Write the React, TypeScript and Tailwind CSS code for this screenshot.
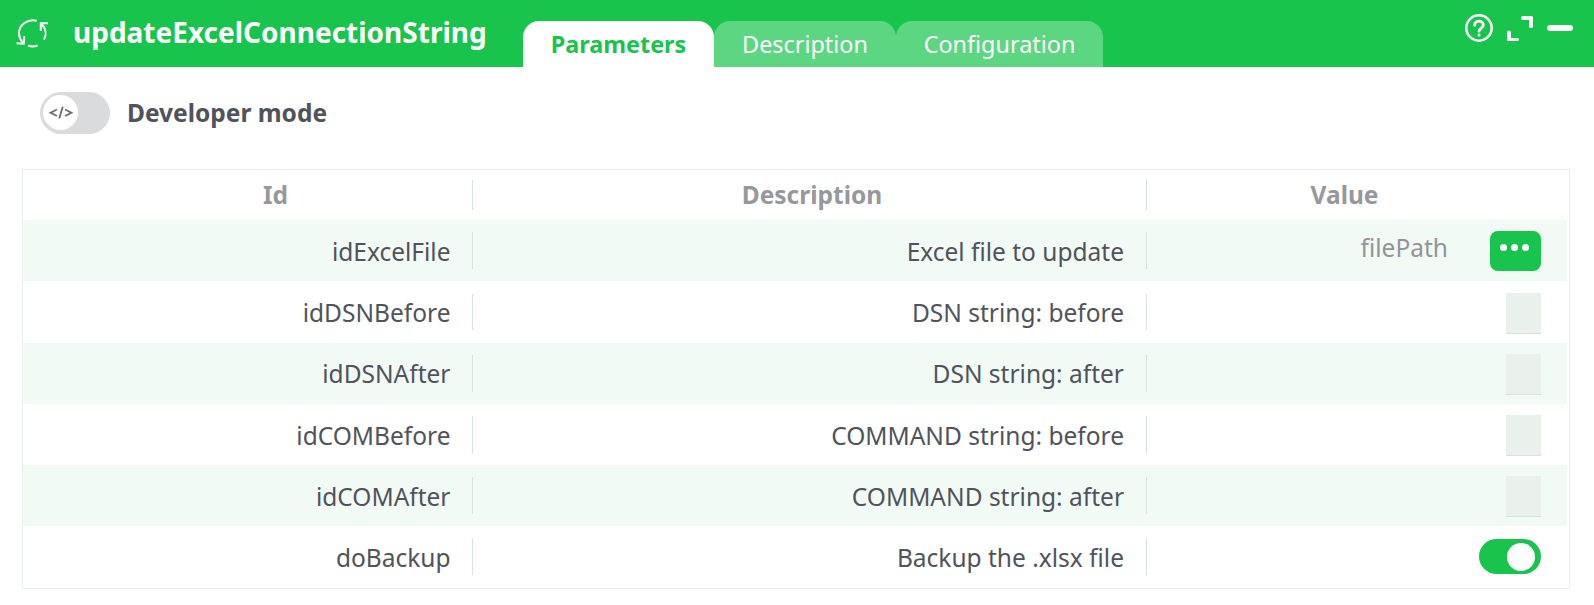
import { ReactNode } from "react"
import clsx from "clsx"

type Param = {
  id: string
  description: string
  tall?: boolean
  pad: string
  value: ReactNode
}

const EmptyField = () => (
  <div className="w-[35px] h-[41px] mt-0.5 bg-[#eaf0eb] border-b border-[#d8e2dc]" />
)

const FilePicker = () => (
  <div className="flex items-start">
    <span className="text-[#929497] leading-[34px] mr-[42px]">filePath</span>
    <button className="w-[51px] h-10 bg-[#18c44c] rounded-lg flex justify-center gap-1 pt-[13px] pr-[2px]">
      <span className="size-[7px] rounded-full bg-white" />
      <span className="size-[7px] rounded-full bg-white" />
      <span className="size-[7px] rounded-full bg-white" />
    </button>
  </div>
)

const Toggle = () => (
  <button className="w-[62px] h-[35px] rounded-full bg-[#18c44c] flex items-center justify-end pr-1.5 mb-px">
    <span className="size-7 rounded-full bg-white" />
  </button>
)

const params: Param[] = [
  { id: "idExcelFile", description: "Excel file to update", pad: "pt-0.5", value: <FilePicker /> },
  { id: "idDSNBefore", description: "DSN string: before", tall: true, pad: "pt-0.5", value: <EmptyField /> },
  { id: "idDSNAfter", description: "DSN string: after", pad: "pt-0", value: <EmptyField /> },
  { id: "idCOMBefore", description: "COMMAND string: before", pad: "pt-0.5", value: <EmptyField /> },
  { id: "idCOMAfter", description: "COMMAND string: after", pad: "pt-0.5", value: <EmptyField /> },
  { id: "doBackup", description: "Backup the .xlsx file", tall: true, pad: "pt-0.5", value: <Toggle /> },
]

const tabs = [
  { label: "Parameters", width: "w-[191px]", active: true },
  { label: "Description", width: "w-[182px]", active: false },
  { label: "Configuration", width: "w-[207px]", active: false },
]

const RefreshIcon = () => (
  <svg className="w-8 h-8" viewBox="0 0 32 32" fill="none" stroke="white" strokeWidth="2">
    <path d="M20.7 3.7C11.5 1.7 3 7.7 3 16.6c0 3.4 1.2 6 3.6 9" />
    <path d="M0.5 26.3l7.2.4.6-7.6" />
    <path d="M12 28.7c3.4 1.1 6.6 1 9.6-.2" />
    <path d="M28 22.7C31 17 29.6 11 25.4 7" />
    <path d="M32 6.3h-7.2v7.6" />
  </svg>
)

const HelpIcon = () => (
  <svg className="w-7 h-7" viewBox="0 0 28 28" fill="none" stroke="white">
    <circle cx="14" cy="14" r="12.7" strokeWidth="2.5" />
    <path d="M9.7 11.3c0-2.7 1.9-4.2 4.3-4.2s4.3 1.6 4.3 3.9c0 3.2-4.3 3.3-4.3 6.2" strokeWidth="2.8" strokeLinecap="round" />
    <circle cx="14" cy="21" r="1.5" fill="white" stroke="none" />
  </svg>
)

const ExpandIcon = () => (
  <svg className="w-[26px] h-[26px]" viewBox="0 0 26 26" fill="white">
    <path d="M16 0H24.5Q26 0 26 1.5V10.5Q26 12 24 12T22 10.5V4H16Q14 4 14 2T16 0Z" />
    <path d="M0 16Q0 14.5 2 14.5T4 16V22H10Q12 22 12 23.5T10 25H0Z" />
  </svg>
)

const Header = () => (
  <header className="h-[67px] bg-[#18c44c] flex items-start">
    <div className="pl-4 pt-[17px]">
      <RefreshIcon />
    </div>
    <h1 className="w-[450px] pl-[25px] pt-3 text-white font-bold text-[28px] leading-[40px] whitespace-nowrap">
      updateExcelConnectionString
    </h1>
    <nav className="flex pt-[21px] pl-[25px]">
      {tabs.map((tab) => (
        <button
          key={tab.label}
          className={clsx(
            "h-[46px] rounded-t-[16px] text-[23.4px] leading-[46px] text-center",
            tab.width,
            tab.active ? "bg-white text-[#18c44c] font-bold" : "bg-[#5dd682] text-white"
          )}
        >
          {tab.label}
        </button>
      ))}
    </nav>
    <div className="ml-auto flex pt-3.5 pr-[21px]">
      <HelpIcon />
      <div className="ml-3.5 mt-0.5">
        <ExpandIcon />
      </div>
      <div className="ml-3.5 mt-[11px] w-[26px] h-1.5 rounded-full bg-white" />
    </div>
  </header>
)

const DeveloperMode = () => (
  <div className="flex items-start pl-10 pt-[25px] h-[67px]">
    <button className="w-[70px] h-[42px] rounded-full bg-[#dadbdd] flex items-start p-[3px]">
      <span className="size-[35px] rounded-full bg-white flex items-center justify-center">
        <svg className="w-6 h-3.5" viewBox="0 0 24 14" fill="none" stroke="#6d6e72" strokeWidth="1.8">
          <path d="M8 3.5L1.6 6.7L8 10M16 3.5L22.4 6.7L16 10M13.8 .8L10.2 12.6" />
        </svg>
      </span>
    </button>
    <span className="ml-[17px] mt-1 text-[24.5px] leading-[34px] font-bold text-[#50535a]">Developer mode</span>
  </div>
)

const Divider = ({ className }: { className: string }) => (
  <div className={clsx("w-px bg-[#d7e4de] shrink-0", className)} />
)

export default function App() {
  return (
    <div className="w-full h-[605px] bg-white overflow-hidden font-['Noto_Sans',sans-serif]">
      <Header />
      <DeveloperMode />
      <div className="mt-[35px] ml-[22px] w-[1548px] h-[420px] border border-[#e8eeeb] text-[24.5px]">
        {/* Column titles */}
        <div className="flex items-center h-[50px] leading-[34px] font-bold text-[#97989b]">
          <div className="w-[449px] pl-[56px] pb-px text-center">Id</div>
          <Divider className="h-[30px]" />
          <div className="w-[673px] pl-[5px] pb-px text-center">Description</div>
          <Divider className="h-[30px]" />
          <div className="w-[395px] pb-px text-center">Value</div>
        </div>
        {params.map((param, i) => (
          <div
            key={param.id}
            className={clsx(
              "flex items-center w-[1544px] leading-[34px] text-[#50535a]",
              param.tall ? "h-[62px]" : "h-[61px]",
              i % 2 === 0 && "bg-[#f2faf6]"
            )}
          >
            <div className={clsx("w-[449px] pr-[21.5px] text-right", param.pad)}>{param.id}</div>
            <Divider className={param.tall ? "h-9" : "h-[37px]"} />
            <div className={clsx("w-[673px] pr-[22px] text-right", param.pad)}>{param.description}</div>
            <Divider className={param.tall ? "h-9" : "h-[37px]"} />
            <div className="flex-1 flex justify-end pr-[26px]">{param.value}</div>
          </div>
        ))}
      </div>
    </div>
  )
}
